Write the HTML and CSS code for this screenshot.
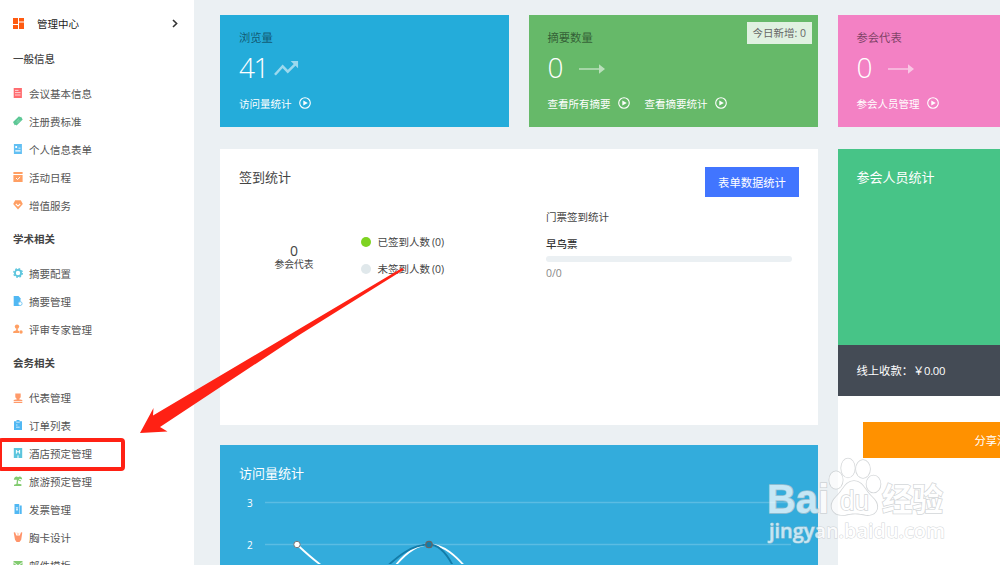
FILE: index.html
```
<!DOCTYPE html>
<html lang="zh-CN">
<head>
    <meta charset="UTF-8">
    <meta name="viewport" content="width=device-width, initial-scale=1.0">
    <title>管理中心</title>
    <link rel="stylesheet" href="styles.css">
</head>
<body>
    <svg class="defs" width="0" height="0">
        <symbol id="play" viewBox="0 0 12 12">
            <circle cx="6" cy="6" r="5.3" fill="none" stroke="currentColor" stroke-width="1.1"/>
            <path d="M4.3 3.4L8.8 6L4.3 8.6Z" fill="currentColor"/>
        </symbol>
        <symbol id="arrow" viewBox="0 0 26 10">
            <path d="M0 4.2H20V0.3L26 5L20 9.7V5.8H0Z" fill="currentColor"/>
        </symbol>
    </svg>
    <div class="page">
        <aside class="sidebar">
            <div class="side-head">
                <svg width="11" height="11" viewBox="0 0 11 11" fill="#ff5a10"><path d="M0 0h5v6H0zM6 0h5v3.5H6zM0 7h5v4H0zM6 4.5h5v6.5H6z"/></svg>
                <span>管理中心</span>
                <svg class="chevron" width="6" height="9" viewBox="0 0 6 9"><path d="M1 1L4.6 4.5L1 8" fill="none" stroke="#333" stroke-width="1.6"/></svg>
            </div>
            <h3>一般信息</h3>
            <ul>
                <li><svg viewBox="0 0 10 10"><path d="M.7 0h8.2v10H.7z" fill="#ff6b6f"/><path d="M2 2.4h3.5M2 4.6h5.5M2 7h5.5" stroke="#fff" stroke-width=".7"/></svg>会议基本信息</li>
                <li><svg viewBox="0 0 10 10"><path d="M0 6L6 .3l1.2 1 .9-.5L9.7 3.5 3.6 9.6l-1-.8-.9.5z" fill="#5cc795"/><path d="M3.5 5.8L6 3.4M4.6 6.8L7 4.4" stroke="#a9e4c9" stroke-width=".6"/></svg>注册费标准</li>
                <li><svg viewBox="0 0 10 10"><path d="M.9 0h8v10h-8z" fill="#61bff3"/><path d="M2.3 2h1.8v2H2.3zM5.5 3.8h2v.8h-2zM2.3 6.3h5.2v1.2H2.3z" fill="#fff"/></svg>个人信息表单</li>
                <li><svg viewBox="0 0 10 10"><path d="M.4 0h9.2v2H.4zM.4 3h9.2v7H.4z" fill="#ff9f63"/><path d="M3 6l1.5 1.5L7.2 5" fill="none" stroke="#fff"/></svg>活动日程</li>
                <li><svg viewBox="0 0 10 10"><path d="M2.2.3h5.6L9.8 4 5 9.6.2 4z" fill="#ff9f63"/><path d="M2.8 4L5 6.1 7.2 4" fill="none" stroke="#fff" stroke-width="1.1"/></svg>增值服务</li>
            </ul>
            <h3>学术相关</h3>
            <ul>
                <li><svg viewBox="0 0 10 10" fill="none" stroke="#5cc5dd"><circle cx="5" cy="5" r="3.1" stroke-width="1.8"/><circle cx="5" cy="5" r="4.3" stroke-width="1.3" stroke-dasharray="1.7 1.68"/></svg>摘要配置</li>
                <li><svg viewBox="0 0 10 10"><path d="M.7 0h4.8l2 2.2V10H.7z" fill="#51b8f3"/><circle cx="7.2" cy="7.6" r="1.9" fill="#fff" stroke="#7bc9f3" stroke-width="1"/></svg>摘要管理</li>
                <li><svg viewBox="0 0 10 10" fill="#ff9f63"><circle cx="4" cy="2.6" r="2.2"/><path d="M3.2 4.2h1.6v2.2l1.2.6v2H.2V7.5l3-1.2z"/><circle cx="8" cy="8" r="1.7"/></svg>评审专家管理</li>
            </ul>
            <h3>会务相关</h3>
            <ul>
                <li><svg viewBox="0 0 10 10" fill="#ff9a6a"><path d="M2.3.5h5.4v3.8L6 6.3l3.3.8v1.2H.7V7.1L4 6.3l-1.7-2zM.7 9h8.6v1H.7z"/></svg>代表管理</li>
                <li><svg viewBox="0 0 10 10"><path d="M1 1.2h2.5V0h3v1.2H9V10H1z" fill="#51b8f3"/><path d="M3.2 2.2h3.6M3 5h1.5M3 7.2h3.7" stroke="#fff" stroke-width=".7"/></svg>订单列表</li>
                <li class="active"><svg viewBox="0 0 10 10"><path d="M.8 0h8.4v10H.8z" fill="#5cc5dd"/><path d="M3.4 2v3.7M6.6 2v3.7M3.4 3.8h3.2M5 7.4V10" stroke="#fff"/></svg>酒店预定管理</li>
                <li><svg viewBox="0 0 10 10" fill="#82cb70"><path d="M.8 3.7C1.3.4 4-.3 5 1.2 7-.4 9 .8 9.2 3.4L6.5 2.8 5.8 3.4l2.3 1-.4 1.2-2.5-1.3-.4 3.5 3.6.5V10H1V8.7l2.4-.8.5-4.2z"/></svg>旅游预定管理</li>
                <li><svg viewBox="0 0 10 10"><path d="M1.5 0h4.7v10H1.5zM6.7 1.5h2V10h-2z" fill="#51b8f3"/><path d="M3.1 3l.9 1.5L5 3M4 4.5V7M3 5.4h2" fill="none" stroke="#fff" stroke-width=".7"/></svg>发票管理</li>
                <li><svg viewBox="0 0 10 10"><path d="M.7.4l1.4-.2 1.2 3.2h3.5L8 .2l1.3.2-1.1 7.3L6.5 10H3.6L2 7.7z" fill="#ff946a"/><path d="M4 .5L5 3 6 .8" fill="none" stroke="#ffc5a7" stroke-width=".7"/></svg>胸卡设计</li>
                <li><svg viewBox="0 0 10 10"><path d="M.5 1h9v8h-9z" fill="#82cb70"/><path d="M.5 2.4L5 5.7l4.5-3.3" fill="none" stroke="#fff" stroke-width=".9"/></svg>邮件模板</li>
            </ul>
        </aside>

        <main class="content">
            <section class="card blue">
                <h4>浏览量</h4>
                <div class="figure">41<svg class="trend" width="25" height="16" viewBox="0 0 26 16"><path d="M1 15L9 6.2L14.3 11.8L22.5 3.8" fill="none" stroke="currentColor" stroke-width="2.6"/><path d="M17.3 .6H25V8.3Z" fill="currentColor"/></svg></div>
                <div class="links"><a>访问量统计<svg><use href="#play"/></svg></a></div>
            </section>
            <section class="card green">
                <h4>摘要数量</h4>
                <span class="today">今日新增: 0</span>
                <div class="figure">0<svg class="arrow"><use href="#arrow"/></svg></div>
                <div class="links"><a>查看所有摘要<svg><use href="#play"/></svg></a><a>查看摘要统计<svg><use href="#play"/></svg></a></div>
            </section>
            <section class="card pink">
                <h4>参会代表</h4>
                <div class="figure">0<svg class="arrow"><use href="#arrow"/></svg></div>
                <div class="links"><a>参会人员管理<svg><use href="#play"/></svg></a></div>
            </section>

            <div class="left">
                <section class="panel checkin">
                    <header>
                        <h2>签到统计</h2>
                        <button>表单数据统计</button>
                    </header>
                    <div class="checkin-body">
                        <div class="total"><b>0</b><span>参会代表</span></div>
                        <ul class="legend">
                            <li><i class="dot on"></i>已签到人数 <span>(0)</span></li>
                            <li><i class="dot"></i>未签到人数 <span>(0)</span></li>
                        </ul>
                        <div class="tickets">
                            <p>门票签到统计</p>
                            <strong>早鸟票</strong>
                            <div class="bar"></div>
                            <small>0/0</small>
                        </div>
                    </div>
                </section>
                <section class="panel visits">
                    <h2>访问量统计</h2>
                    <svg class="chart" width="598" height="80" viewBox="0 0 598 80">
                        <path d="M45 18.5H571M45 60.5H571" stroke="#fff" stroke-opacity=".2" stroke-width="1.5"/>
                        <text x="27" y="22.5">3</text>
                        <text x="27" y="64.5">2</text>
                        <g fill="none" stroke-width="1.8">
                            <path d="M77 60.5C87 70 95 77 105 84M172 86C184 70 196 60.5 209 60.5C224 60.5 236 72 248 86" stroke="#fff"/>
                            <path d="M163 86C178 72 192 60.5 209 60.5C221 60.5 229 73 235 86" stroke="#137ca9"/>
                        </g>
                        <circle cx="77" cy="60.5" r="3.2" fill="#fff" stroke="#777"/>
                        <circle cx="209" cy="60.5" r="3.2" fill="#137ca9" stroke="#666" stroke-width="1.3"/>
                    </svg>
                </section>
            </div>
            <div class="right">
                <section class="people"><h2>参会人员统计</h2></section>
                <div class="income">线上收款：<span>￥0.00</span></div>
                <div class="share"><button>分享活动</button></div>
            </div>
        </main>
    </div>

    <svg class="pointer" width="265" height="166" viewBox="0 0 265 166"><path d="M262 0L13 147.5L13.5 140L0 165L27.5 163.5L20 159L160 66.5L264 1.5Z" fill="#ff2114"/></svg>

    <svg class="watermark" width="190" height="100" viewBox="0 0 190 100">
        <g class="mark">
            <ellipse cx="75" cy="25" rx="6.7" ry="8.8"/>
            <ellipse cx="87" cy="13" rx="6.8" ry="9.4"/>
            <ellipse cx="102" cy="14" rx="7" ry="9"/>
            <ellipse cx="112.5" cy="29" rx="7" ry="8.5"/>
            <path d="M93 26C102 26 104 36 111 42C120 50 117 61 105 60C98 58 90 58 84 60C70 61 67 50 75 42C82 36 84 26 93 26Z"/>
            <text class="logo" x="6" y="58" textLength="62" lengthAdjust="spacingAndGlyphs">Bai</text>
            <text class="logo du" x="79" y="55" textLength="29" lengthAdjust="spacingAndGlyphs">du</text>
            <text class="logo cn" x="121" y="56" textLength="61" lengthAdjust="spacingAndGlyphs">经验</text>
            <text class="url" x="8" y="82.5" textLength="176" lengthAdjust="spacingAndGlyphs">jingyan.baidu.com</text>
        </g>
    </svg>
</body>
</html>
```
FILE: styles.css
```
*, *::after {
    box-sizing: border-box;
}
body {
    margin: 0;
    height: 565px;
    overflow: hidden;
    position: relative;
    background: #ebf0f3;
    color: #444;
    font-family: "Open Sans", "Noto Sans CJK SC", sans-serif;
    font-size: 10.5px;
}
h2, h3, h4, p, ul {
    margin: 0;
    padding: 0;
    font-weight: 400;
}
ul {
    list-style: none;
}
button {
    border: 0;
    color: #fff;
    font-family: inherit;
    font-size: 11.3px;
}
.defs {
    position: absolute;
}
.page {
    display: flex;
    height: 565px;
    overflow: hidden;
}

/* sidebar */
.sidebar {
    flex: 0 0 194px;
    background: #fff;
    height: 600px;
}
.side-head {
    display: flex;
    align-items: center;
    height: 38.9px;
    padding: 8px 16px 0 13px;
    color: #222;
}
.side-head span {
    margin-left: 13px;
}
.chevron {
    margin-left: auto;
}
.sidebar h3 {
    height: 40.4px;
    line-height: 40px;
    padding-left: 13px;
    font-size: 10.5px;
    font-weight: 700;
    color: #444;
}
.sidebar h3:nth-of-type(1) {
    font-weight: 500;
}
.sidebar li {
    display: flex;
    align-items: center;
    height: 27.95px;
    padding-left: 13px;
    color: #555;
}
.sidebar li svg {
    width: 10px;
    height: 10px;
    margin-right: 6px;
}
.sidebar li.active {
    position: relative;
}
.sidebar li.active::after {
    content: "";
    position: absolute;
    left: -2px;
    top: -1.5px;
    width: 127px;
    height: 33px;
    border: 4px solid #ff2114;
    border-radius: 4px;
}

/* dashboard */
.content {
    flex: none;
    width: 960px;
    height: 620px;
    padding: 15px 0 0 26px;
    display: grid;
    grid-template-columns: 289px 289.5px 330px;
    grid-template-rows: 111.5px 1fr;
    column-gap: 19.5px;
    row-gap: 22px;
}
.card {
    position: relative;
    padding: 14px 19px 0;
    color: #fff;
}
.blue { background: #24acda; }
.green { background: #66b969; }
.pink { background: #f381c4; }
.card h4 {
    font-size: 11.3px;
    line-height: 17px;
    color: rgba(0, 0, 0, .5);
}
.figure {
    display: flex;
    align-items: center;
    height: 42px;
    font-size: 28px;
    font-weight: 300;
    letter-spacing: -1.5px;
}
.figure svg {
    opacity: .55;
}
.trend {
    margin-left: 6px;
    margin-top: 2px;
}
.arrow {
    width: 26px;
    height: 10px;
    margin-left: 17px;
    margin-top: 3px;
}
.links {
    display: flex;
    gap: 15px;
    line-height: 16px;
    margin-top: 8px;
}
.links a {
    display: flex;
    align-items: center;
}
.links svg {
    width: 12px;
    height: 12px;
    margin: -2px 0 0 7px;
}
.today {
    position: absolute;
    right: 6px;
    top: 7px;
    height: 22px;
    padding: 0 6px;
    line-height: 22px;
    background: rgba(255, 255, 255, .8);
    color: #666;
}
.left {
    grid-column: 1 / 3;
}
.panel h2, .people h2 {
    font-size: 13px;
    line-height: 20px;
}
.checkin {
    height: 276.5px;
    padding: 18.5px 19px 0;
    background: #fff;
}
.checkin header {
    display: flex;
    justify-content: space-between;
}
.checkin header button {
    width: 94px;
    height: 29.5px;
    background: #4175ff;
}
.checkin-body {
    display: grid;
    grid-template-columns: 122px 185px 246px;
    padding-top: 11.5px;
}
.total {
    display: flex;
    flex-direction: column;
    align-items: center;
    width: 110px;
    padding-top: 35.5px;
    line-height: 13px;
    font-size: 9.8px;
}
.total b {
    font-size: 14px;
    font-weight: 400;
    line-height: 14px;
}
.legend {
    padding-top: 20px;
}
.legend li {
    display: flex;
    align-items: center;
    height: 27px;
}
.legend span {
    margin-left: 2px;
}
.dot {
    width: 10px;
    height: 10px;
    margin-right: 6.5px;
    border-radius: 50%;
    background: #e0e8eb;
}
.dot.on {
    background: #7ed321;
}
.tickets p {
    line-height: 18px;
}
.tickets strong {
    display: block;
    margin-top: 10px;
    line-height: 17px;
    font-weight: 500;
    color: #333;
}
.bar {
    height: 6px;
    margin-top: 3px;
    border-radius: 3px;
    background: #ebf0f3;
}
.tickets small {
    display: block;
    margin-top: 3px;
    line-height: 16px;
    font-size: 10.5px;
    color: #888;
}
.visits {
    height: 180px;
    margin-top: 19.5px;
    padding-top: 18px;
    background: #33acdc;
    color: #fff;
}
.visits h2 {
    padding-left: 19px;
}
.chart {
    display: block;
    margin-top: 1.5px;
}
.chart text {
    fill: #fff;
    font-size: 10px;
}
.right {
    background: #fff;
}
.people {
    height: 196.5px;
    padding: 18.5px 19px;
    background: #47c487;
    color: #fff;
}
.income {
    height: 51px;
    padding-left: 19px;
    line-height: 51px;
    background: #444b55;
    color: #fff;
    font-size: 11.3px;
}
.income span {
    letter-spacing: -.3px;
}
.share {
    padding: 26px 25px;
}
.share button {
    display: block;
    width: 280px;
    height: 36px;
    padding: 0 0 0 112px;
    background: #ff9100;
    text-align: left;
}

/* overlays */
.pointer {
    position: absolute;
    left: 140px;
    top: 268px;
}
.watermark {
    position: absolute;
    left: 761px;
    top: 455px;
}
.mark {
    fill: #fff;
    stroke: #c4c8cb;
    stroke-width: 1.6px;
    paint-order: stroke;
    opacity: .72;
}
.logo {
    font-family: "Liberation Sans", sans-serif;
    font-size: 40px;
    font-weight: 700;
}
.logo.du {
    font-size: 27px;
    font-weight: 400;
}
.logo.cn {
    font-family: "Noto Sans CJK SC", sans-serif;
    font-size: 32px;
}
.url {
    font-family: "Open Sans", sans-serif;
    font-size: 19px;
    font-weight: 600;
    stroke-width: 1px;
}
```
